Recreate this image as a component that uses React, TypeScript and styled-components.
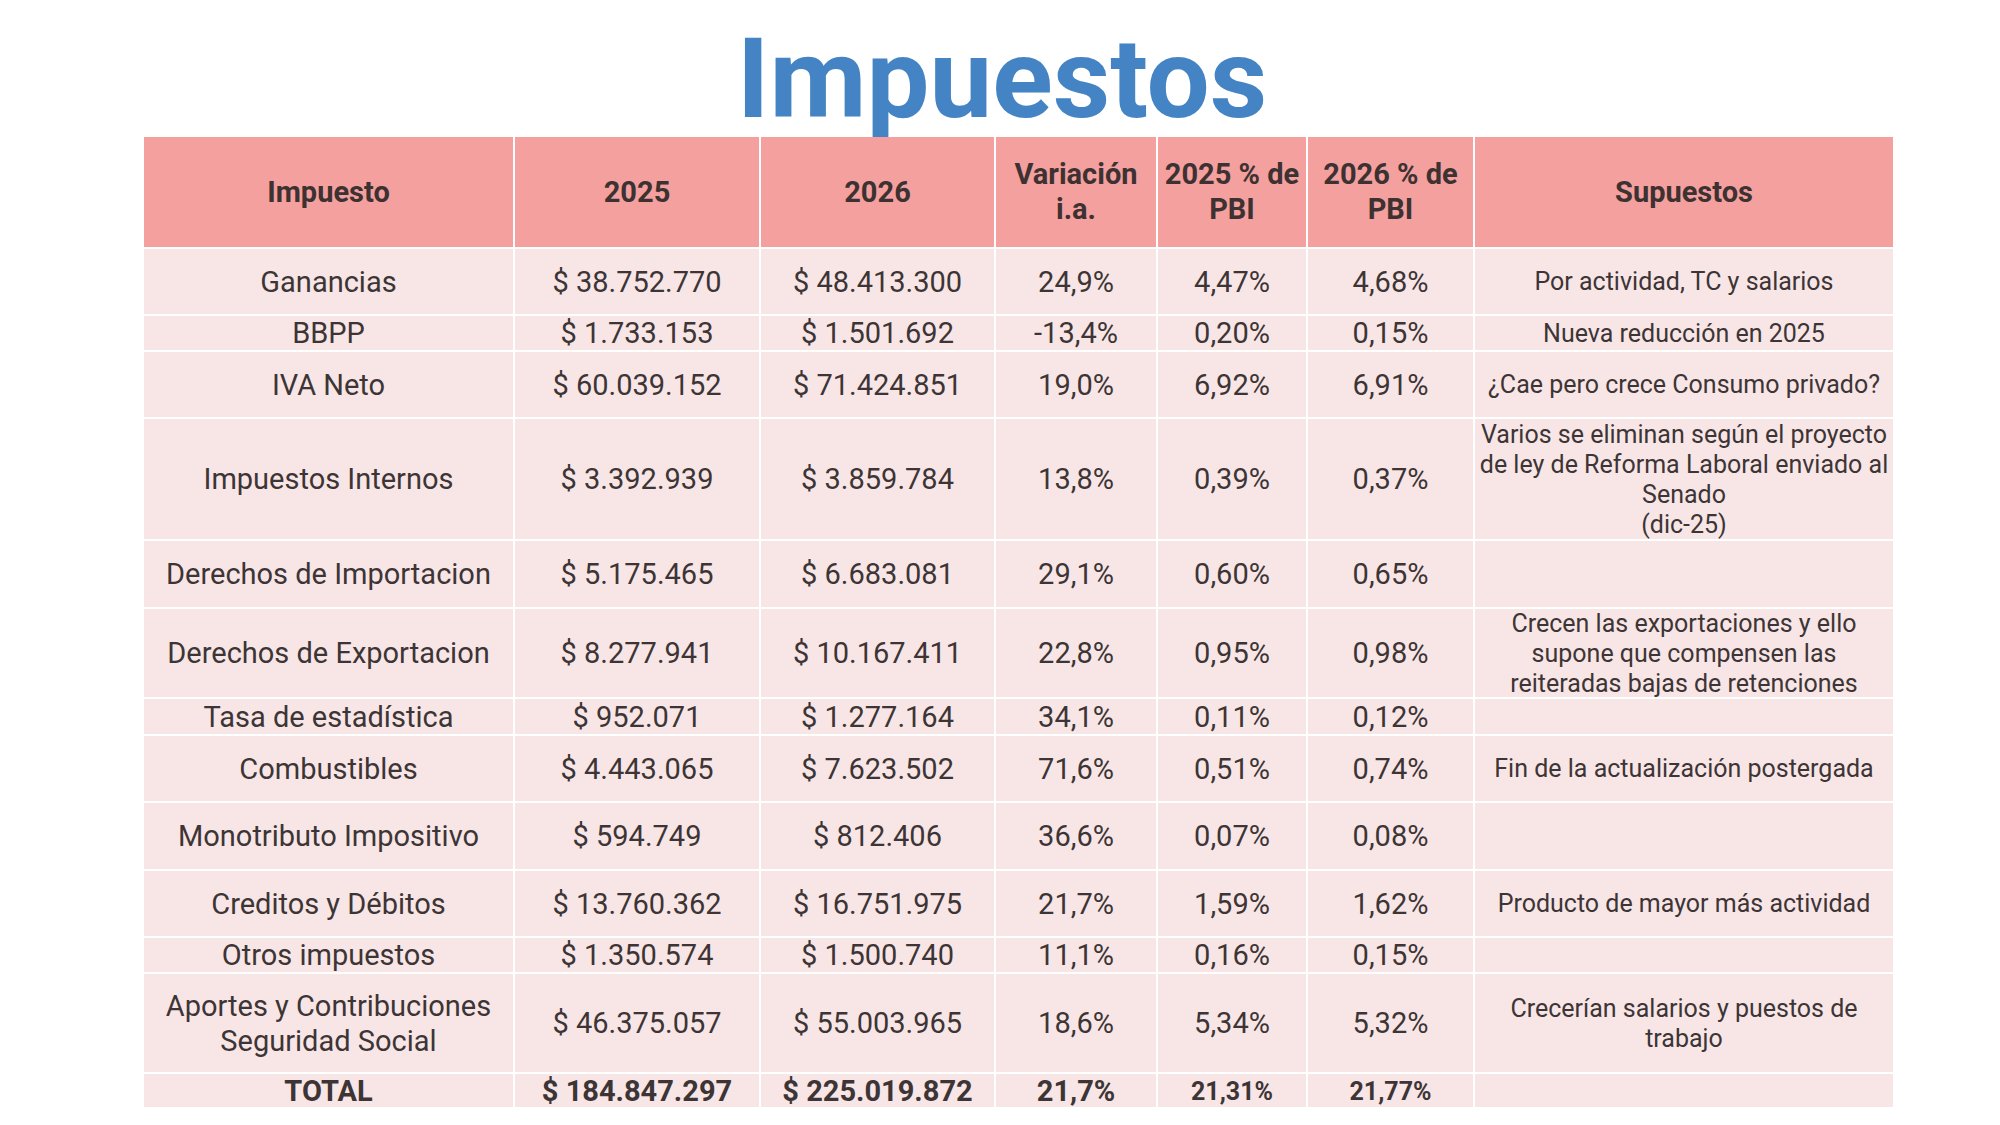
import React from 'react';
import styled, { createGlobalStyle } from 'styled-components';

interface TaxRow {
    name: React.ReactNode;
    y2025: string;
    y2026: string;
    variation: string;
    pbi2025: string;
    pbi2026: string;
    note: React.ReactNode;
    height: number;
}

const columns = '369px 244px 233px 160px 148px 165px 418px';

const rows: TaxRow[] = [
    { name: 'Ganancias', y2025: '$ 38.752.770', y2026: '$ 48.413.300', variation: '24,9%', pbi2025: '4,47%', pbi2026: '4,68%', note: 'Por actividad, TC y salarios', height: 65 },
    { name: 'BBPP', y2025: '$ 1.733.153', y2026: '$ 1.501.692', variation: '-13,4%', pbi2025: '0,20%', pbi2026: '0,15%', note: 'Nueva reducción en 2025', height: 34 },
    { name: 'IVA Neto', y2025: '$ 60.039.152', y2026: '$ 71.424.851', variation: '19,0%', pbi2025: '6,92%', pbi2026: '6,91%', note: '¿Cae pero crece Consumo privado?', height: 65 },
    {
        name: 'Impuestos Internos', y2025: '$ 3.392.939', y2026: '$ 3.859.784', variation: '13,8%', pbi2025: '0,39%', pbi2026: '0,37%',
        note: (<>Varios se eliminan según el proyecto<br />de ley de Reforma Laboral enviado al<br />Senado<br />(dic-25)</>),
        height: 120,
    },
    { name: 'Derechos de Importacion', y2025: '$ 5.175.465', y2026: '$ 6.683.081', variation: '29,1%', pbi2025: '0,60%', pbi2026: '0,65%', note: '', height: 66 },
    {
        name: 'Derechos de Exportacion', y2025: '$ 8.277.941', y2026: '$ 10.167.411', variation: '22,8%', pbi2025: '0,95%', pbi2026: '0,98%',
        note: (<>Crecen las exportaciones y ello<br />supone que compensen las<br />reiteradas bajas de retenciones</>),
        height: 88,
    },
    { name: 'Tasa de estadística', y2025: '$ 952.071', y2026: '$ 1.277.164', variation: '34,1%', pbi2025: '0,11%', pbi2026: '0,12%', note: '', height: 35 },
    { name: 'Combustibles', y2025: '$ 4.443.065', y2026: '$ 7.623.502', variation: '71,6%', pbi2025: '0,51%', pbi2026: '0,74%', note: 'Fin de la actualización postergada', height: 65 },
    { name: 'Monotributo Impositivo', y2025: '$ 594.749', y2026: '$ 812.406', variation: '36,6%', pbi2025: '0,07%', pbi2026: '0,08%', note: '', height: 66 },
    { name: 'Creditos y Débitos', y2025: '$ 13.760.362', y2026: '$ 16.751.975', variation: '21,7%', pbi2025: '1,59%', pbi2026: '1,62%', note: 'Producto de mayor más actividad', height: 65 },
    { name: 'Otros impuestos', y2025: '$ 1.350.574', y2026: '$ 1.500.740', variation: '11,1%', pbi2025: '0,16%', pbi2026: '0,15%', note: '', height: 34 },
    {
        name: (<>Aportes y Contribuciones<br />Seguridad Social</>), y2025: '$ 46.375.057', y2026: '$ 55.003.965', variation: '18,6%', pbi2025: '5,34%', pbi2026: '5,32%',
        note: (<>Crecerían salarios y puestos de<br />trabajo</>),
        height: 98,
    },
];

const App: React.FC = () => {
    return (
        <Page>
            <GlobalStyle />
            <Title>Impuestos</Title>
            <Table>
                <Row $height={110}>
                    <HeadCell>Impuesto</HeadCell>
                    <HeadCell>2025</HeadCell>
                    <HeadCell>2026</HeadCell>
                    <HeadCell>Variación<br />i.a.</HeadCell>
                    <HeadCell>2025 % de<br />PBI</HeadCell>
                    <HeadCell>2026 % de<br />PBI</HeadCell>
                    <HeadCell>Supuestos</HeadCell>
                </Row>
                {rows.map((row, i) => (
                    <Row key={i} $height={row.height}>
                        <Cell>{row.name}</Cell>
                        <Cell>{row.y2025}</Cell>
                        <Cell>{row.y2026}</Cell>
                        <Cell>{row.variation}</Cell>
                        <Cell>{row.pbi2025}</Cell>
                        <Cell>{row.pbi2026}</Cell>
                        <Cell $note>{row.note}</Cell>
                    </Row>
                ))}
                <Row $height={33}>
                    <Cell $bold>TOTAL</Cell>
                    <Cell $bold>$ 184.847.297</Cell>
                    <Cell $bold>$ 225.019.872</Cell>
                    <Cell $bold>21,7%</Cell>
                    <Cell $bold $small>21,31%</Cell>
                    <Cell $bold $small>21,77%</Cell>
                    <Cell />
                </Row>
            </Table>
        </Page>
    );
};

export default App;

const GlobalStyle = createGlobalStyle`
  html, body {
    margin: 0;
    padding: 0;
    background: #ffffff;
  }
  body {
    font-family: Roboto, "Liberation Sans", sans-serif;
  }
`;

const Page = styled.div`
  width: 2000px;
  height: 1125px;
  padding-top: 23px;
  box-sizing: border-box;
  overflow: hidden;
`;

const Title = styled.h1`
  margin: 0 0 2px;
  height: 112px;
  font-family: Roboto, "Liberation Sans", sans-serif;
  font-size: 112px;
  line-height: 112px;
  font-weight: 700;
  color: #4584c4;
  text-align: center;
  padding-left: 4px;
`;

const Table = styled.div`
  display: flex;
  flex-direction: column;
  gap: 2px;
  margin-left: 144px;
  width: 1749px;
  background: #ffffff;
`;

const Row = styled.div<{ $height: number }>`
  display: grid;
  grid-template-columns: ${columns};
  grid-template-rows: ${(p) => p.$height}px;
  gap: 2px;
  height: ${(p) => p.$height}px;
  flex-shrink: 0;
`;

const HeadCell = styled.div`
  display: flex;
  align-items: center;
  justify-content: center;
  text-align: center;
  background: #f3a09e;
  color: #3d3131;
  font-weight: 700;
  font-size: 29px;
  line-height: 35px;
`;

const Cell = styled.div<{ $note?: boolean; $bold?: boolean; $small?: boolean }>`
  display: flex;
  align-items: center;
  justify-content: center;
  text-align: center;
  min-height: 0;
  background: #f8e6e7;
  color: #3d3535;
  white-space: nowrap;
  padding-top: 1px;
  font-weight: ${(p) => (p.$bold ? 700 : 400)};
  font-size: ${(p) => (p.$note ? '25px' : p.$small ? '25px' : '29px')};
  line-height: ${(p) => (p.$note ? '30px' : '35px')};
`;
